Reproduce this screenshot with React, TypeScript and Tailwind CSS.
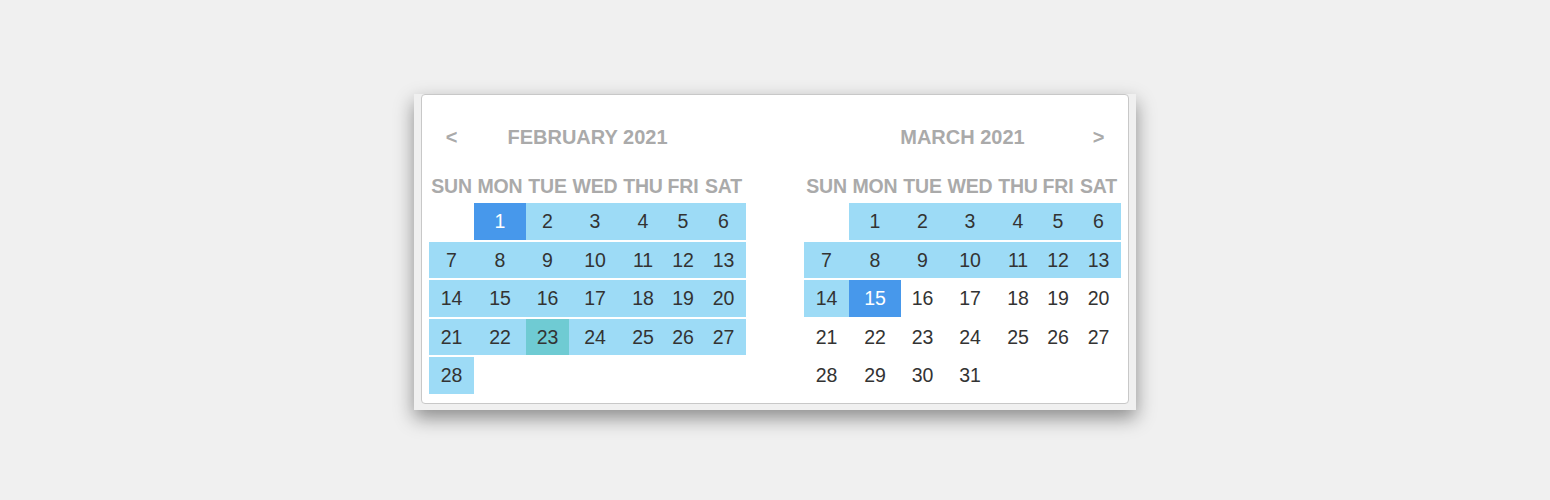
import React from "react";

const COLS = [45, 52, 43, 52, 44, 36, 45];
const DAYS = ["SUN", "MON", "TUE", "WED", "THU", "FRI", "SAT"];

type Cell = { d: number | null; kind: "none" | "range" | "sel" | "today" };

function Month({
  title,
  startDow,
  days,
  kindOf,
  prev,
  next,
}: {
  title: string;
  startDow: number;
  days: number;
  kindOf: (d: number) => Cell["kind"];
  prev?: boolean;
  next?: boolean;
}) {
  const cells: Cell[] = [];
  for (let i = 0; i < startDow; i++) cells.push({ d: null, kind: "none" });
  for (let d = 1; d <= days; d++) cells.push({ d, kind: kindOf(d) });
  while (cells.length < 35) cells.push({ d: null, kind: "none" });
  const rows: Cell[][] = [];
  for (let r = 0; r < 5; r++) rows.push(cells.slice(r * 7, r * 7 + 7));

  const grid = "grid grid-cols-[45px_52px_43px_52px_44px_36px_45px]";
  return (
    <div className="flex flex-col w-[317px]">
      <div className={`${grid} h-[38px] items-center mt-[23px] text-[#aaaaaa] font-bold text-[20px]`}>
        <div className="text-center">{prev ? "<" : ""}</div>
        <div className="col-span-5 text-center">{title}</div>
        <div className="text-center">{next ? ">" : ""}</div>
      </div>
      <div className={`${grid} h-[34px] mt-[14px] items-center text-[#aaaaaa] font-bold text-[19.5px] tracking-[-0.2px]`}>
        {DAYS.map((d) => (
          <div key={d} className="text-center whitespace-nowrap">
            {d}
          </div>
        ))}
      </div>
      <div className="flex flex-col gap-[2px] -mt-[1px]">
        {rows.map((row, ri) => (
          <div key={ri} className={`${grid} h-[36.5px]`}>
            {row.map((c, ci) => {
              const bg =
                c.kind === "range"
                  ? "bg-[#9ddbf6] text-[#333333]"
                  : c.kind === "sel"
                  ? "bg-[#4798eb] text-white"
                  : c.kind === "today"
                  ? "bg-[#6fcbd3] text-[#333333]"
                  : "text-[#333333]";
              return (
                <div
                  key={ci}
                  className={`flex items-center justify-center pt-[1px] text-[19.5px] ${bg}`}
                  style={{ width: COLS[ci] }}
                >
                  {c.d ?? ""}
                </div>
              );
            })}
          </div>
        ))}
      </div>
    </div>
  );
}

export default function App() {
  return (
    <div className="w-full h-[500px] bg-[#f0f0f0] flex justify-center pt-[94px] font-['Liberation_Sans',Arial,sans-serif]">
      <div className="h-fit bg-[#f0f0f0] px-[7px] pb-[6px] shadow-[0_8px_18px_rgba(0,0,0,0.42)]">
        <div className="w-[708px] bg-white border border-[#c8c8c8] rounded-[4px] px-[7px] pb-[9px] flex justify-between">
          <Month
            title="FEBRUARY 2021"
            startDow={1}
            days={28}
            kindOf={(d) => (d === 1 ? "sel" : d === 23 ? "today" : "range")}
            prev
          />
          <Month
            title="MARCH 2021"
            startDow={1}
            days={31}
            kindOf={(d) => (d < 15 ? "range" : d === 15 ? "sel" : "none")}
            next
          />
        </div>
      </div>
    </div>
  );
}
